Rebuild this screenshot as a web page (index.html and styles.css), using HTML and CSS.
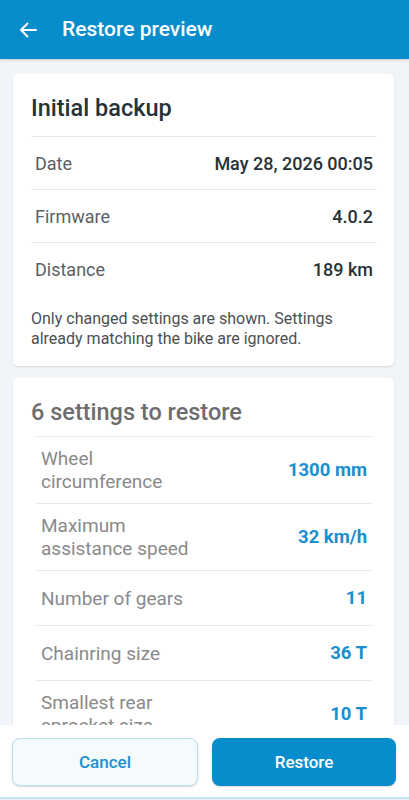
FILE: index.html
```html
<!DOCTYPE html>
<html>

<head>
    <title>Restore preview</title>
    <meta name="viewport" content="width=device-width, initial-scale=1.0">
    <link rel="stylesheet" href="styles.css">
</head>

<body>
    <header class="appbar">
        <button class="back" aria-label="Back">
            <svg width="18" height="16" viewBox="0 0 18 16">
                <path d="M17 8H2M8.5 1.5L2 8l6.5 6.5" fill="none" stroke="#fff" stroke-width="2" stroke-linecap="round" stroke-linejoin="round" />
            </svg>
        </button>
        <h1>Restore preview</h1>
    </header>

    <main class="content">
        <section class="card backup">
            <h2>Initial backup</h2>
            <div class="rows">
                <div class="row">
                    <span class="label">Date</span>
                    <span class="value">May 28, 2026 00:05</span>
                </div>
                <div class="row">
                    <span class="label">Firmware</span>
                    <span class="value">4.0.2</span>
                </div>
                <div class="row">
                    <span class="label">Distance</span>
                    <span class="value">189 km</span>
                </div>
            </div>
            <p class="note">Only changed settings are shown. Settings already matching the bike are ignored.</p>
        </section>

        <section class="card settings">
            <h2>6 settings to restore</h2>
            <div class="rows">
                <div class="row">
                    <span class="label">Wheel<br>circumference</span>
                    <span class="value">1300 mm</span>
                </div>
                <div class="row">
                    <span class="label">Maximum<br>assistance speed</span>
                    <span class="value">32 km/h</span>
                </div>
                <div class="row">
                    <span class="label">Number of gears</span>
                    <span class="value">11</span>
                </div>
                <div class="row">
                    <span class="label">Chainring size</span>
                    <span class="value">36 T</span>
                </div>
                <div class="row">
                    <span class="label">Smallest rear<br>sprocket size</span>
                    <span class="value">10 T</span>
                </div>
            </div>
        </section>
    </main>

    <footer class="actions">
        <button class="btn cancel">Cancel</button>
        <button class="btn restore">Restore</button>
    </footer>
</body>

</html>
```

FILE: styles.css
```css
html,
body {
    margin: 0;
    height: 100%;
}

body {
    font-family: Roboto, "Noto Sans", Arial, sans-serif;
    background-color: #f1f5fa;
    display: flex;
    flex-direction: column;
    overflow: hidden;
}

.appbar {
    flex: none;
    height: 59px;
    background-color: #078dcb;
    display: flex;
    align-items: center;
    box-shadow: 0 1px 3px rgba(0, 0, 0, .18);
    position: relative;
    z-index: 1;
}

.back {
    border: 0;
    background: none;
    padding: 0;
    margin: 0 25px 0 19px;
    width: 18px;
    height: 16px;
    display: flex;
}

.appbar h1 {
    margin: 0;
    color: #fff;
    font-size: 21px;
    font-weight: 500;
    padding-bottom: 1px;
}

.content {
    flex: 1;
    overflow: hidden;
    padding: 15px 15px 0 13px;
    display: flex;
    flex-direction: column;
    gap: 12px;
}

.card {
    flex: none;
    background-color: #fff;
    border-radius: 5px;
    box-shadow: 0 1px 2px rgba(0, 0, 0, .12);
    padding: 20px 17px 17px 18px;
}

.card h2 {
    margin: 0 0 14px 0;
    font-size: 23.5px;
    line-height: 28px;
    font-weight: 500;
    color: #263238;
}

.rows {
    border-top: 1px solid #e6e9ec;
}

.row {
    display: flex;
    align-items: center;
    justify-content: space-between;
    border-bottom: 1px solid #e6e9ec;
}

.row:last-child {
    border-bottom: 0;
}

.backup .row {
    height: 52px;
    padding: 0 4px;
}

.backup .label {
    font-size: 18px;
    color: #5b5f63;
}

.backup .value {
    font-size: 18px;
    font-weight: 500;
    color: #263238;
}

.note {
    margin: 14px 0 0 0;
    font-size: 16px;
    line-height: 20px;
    color: #4a4f54;
}

.settings h2 {
    color: #6d6d6d;
    margin-bottom: 10px;
}

.settings .rows {
    margin: 0 4px;
}

.settings .row {
    min-height: 55px;
    padding: 10px 6px;
    box-sizing: border-box;
}

.settings .label {
    font-size: 19px;
    line-height: 23px;
    color: #8a8a8a;
}

.settings .value {
    font-size: 18.5px;
    font-weight: 700;
    color: #1a8fd0;
}

.actions {
    flex: none;
    background-color: #fff;
    display: flex;
    gap: 14px;
    padding: 13px 13px 11px 12px;
    border-bottom: 2px solid #c3e3f3;
    margin-bottom: 1px;
}

.btn {
    flex: 1;
    height: 48px;
    border-radius: 8px;
    font-family: inherit;
    font-size: 17px;
    font-weight: 500;
}

.cancel {
    background-color: #f5fafd;
    border: 1px solid #b9def1;
    color: #1a8fd0;
    box-shadow: 0 1px 2px rgba(0, 0, 0, .15);
}

.restore {
    background-color: #078dcb;
    border: 0;
    color: #fff;
    box-shadow: 0 1px 2px rgba(0, 0, 0, .15);
}
```
